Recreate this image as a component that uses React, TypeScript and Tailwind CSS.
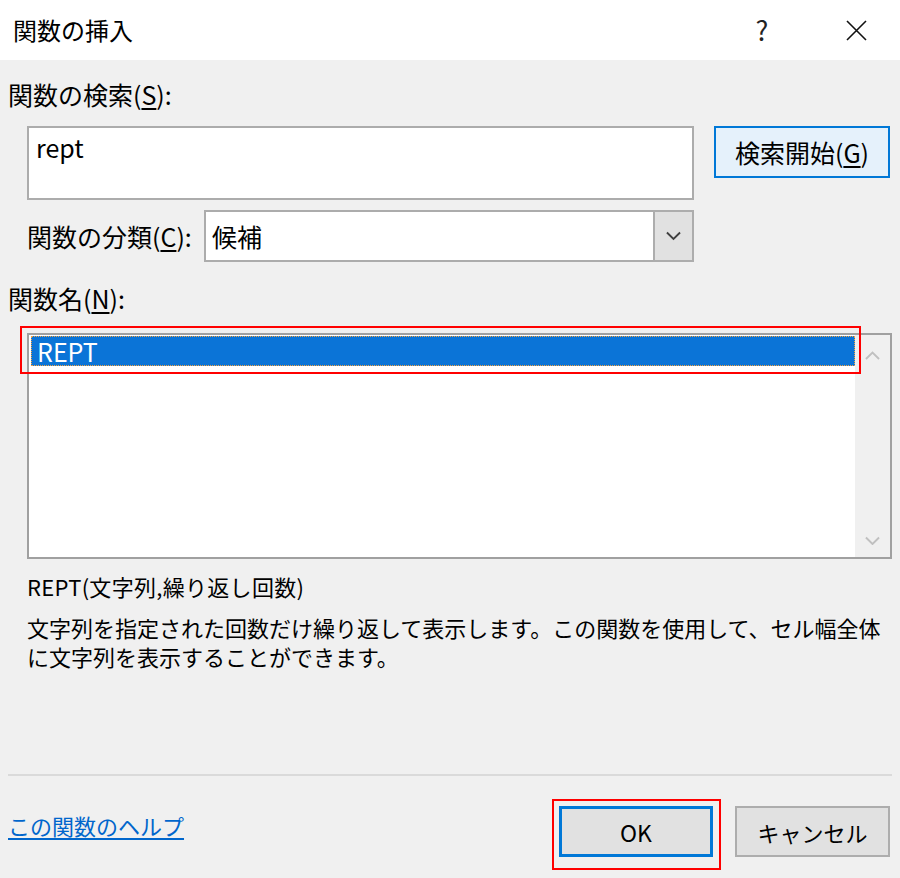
import { ReactNode } from "react";

function Mn({ children }: { children: ReactNode }) {
  return <span className="underline underline-offset-[3px]">{children}</span>;
}

function Chevron({ dir, color, size }: { dir: "up" | "down"; color: string; size: number }) {
  return (
    <svg width={size} height={size / 2 + 2} viewBox="0 0 16 10" fill="none">
      <path
        d={dir === "down" ? "M1 1.5 L8 8.5 L15 1.5" : "M1 8.5 L8 1.5 L15 8.5"}
        stroke={color}
        strokeWidth="2"
      />
    </svg>
  );
}

export default function App() {
  return (
    <div className="w-[900px] h-[878px] bg-[#f0f0f0] text-black font-['Noto_Sans_CJK_JP','Noto_Sans',sans-serif] flex flex-col overflow-hidden text-[25px]">
      {/* title bar */}
      <div className="h-[60px] bg-white flex items-center pl-[13px] shrink-0">
        <span className="flex-1 leading-[30px] text-[24px]">関数の挿入</span>
        <span className="w-[20px] text-center leading-[30px] text-[27px] text-[#222]">?</span>
        <svg className="ml-[74px] mr-[33px]" width="21" height="21" viewBox="0 0 21 21">
          <path d="M1 1 L20 20 M20 1 L1 20" stroke="#111" strokeWidth="1.6" />
        </svg>
      </div>

      <div className="flex flex-col pl-[8px]">
        <div className="mt-[19px] leading-[30px]">
          関数の検索(<Mn>S</Mn>):
        </div>

        <div className="mt-[17px] pl-[19px] flex">
          <div className="w-[667px] h-[74px] border-2 border-[#acacac] bg-white pl-[7px] pt-[4px] leading-[30px]">
            rept
          </div>
          <button className="ml-[20px] w-[176px] h-[52px] border-2 border-[#0078d7] bg-[#e5f1fb] leading-[30px]">
            検索開始(<Mn>G</Mn>)
          </button>
        </div>

        <div className="mt-[10px] pl-[19px] flex items-center">
          <div className="w-[177px] leading-[30px]">
            関数の分類(<Mn>C</Mn>):
          </div>
          <div className="w-[490px] h-[52px] border-2 border-[#acacac] bg-white flex">
            <div className="flex-1 pl-[6px] flex items-center leading-[30px]">候補</div>
            <div className="w-[37px] h-full bg-[#e1e1e1] border-2 border-[#adadad] -my-[2px] -mr-[2px] box-content flex items-center justify-center">
              <Chevron dir="down" color="#404040" size={15} />
            </div>
          </div>
        </div>

        <div className="mt-[21px] leading-[30px]">
          関数名(<Mn>N</Mn>):
        </div>

        <div className="mt-[20px] ml-[19px] relative w-[865px] h-[226px]">
          <div className="w-full h-full border-2 border-[#a0a0a0] bg-white flex">
            <div className="flex-1 pl-[2px] pt-[1px]">
              <div className="h-[30px] bg-[#0b74d7] border border-dotted border-[#f5a340] text-white pl-[5px] flex items-center leading-[28px]">
                REPT
              </div>
            </div>
            <div className="w-[35px] bg-[#f0f0f0] flex flex-col items-center justify-between pt-[16px] pb-[12px]">
              <Chevron dir="up" color="#c0c0c0" size={15} />
              <Chevron dir="down" color="#c0c0c0" size={15} />
            </div>
          </div>
          <div className="absolute left-[-7px] top-[-7px] w-[841px] h-[48px] border-2 border-[#ff0000]" />
        </div>

        <div className="mt-[12px] pl-[19px] leading-[30px] text-[22px] tracking-[0.3px]">REPT(文字列,繰り返し回数)</div>
        <div className="mt-[12px] pl-[19px] leading-[29px] whitespace-nowrap text-[22px]">
          <div>文字列を指定された回数だけ繰り返して表示します。この関数を使用して、セル幅全体</div>
          <div>に文字列を表示することができます。</div>
        </div>

        <div className="mt-[103px] w-[884px] h-[2px] bg-[#dadada]" />

        <div className="mt-[30px] flex items-center text-[22px]">
          <a className="text-[#0066cc] underline underline-offset-[3px] leading-[30px] -mt-[13px] flex-1">
            この関数のヘルプ
          </a>
          <div className="relative">
            <button className="w-[154px] h-[51px] border-[3px] border-[#0078d7] bg-[#e1e1e1] leading-[30px] text-[23px]">
              OK
            </button>
            <div className="absolute left-[-7px] top-[-7px] w-[169px] h-[71px] border-2 border-[#ff0000]" />
          </div>
          <button className="ml-[22px] mr-[10px] w-[155px] h-[51px] border-2 border-[#adadad] bg-[#e1e1e1] leading-[30px]">
            キャンセル
          </button>
        </div>
      </div>
    </div>
  );
}
